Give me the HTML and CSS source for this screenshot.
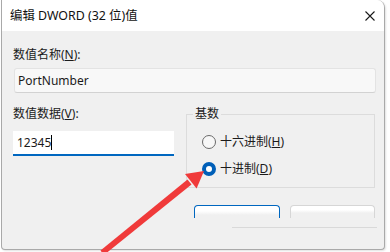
FILE: index.html
```html
<!DOCTYPE html>
<html lang="zh-CN">
<head>
<meta charset="utf-8">
<title>编辑 DWORD (32 位)值</title>
<link rel="stylesheet" href="styles.css">
</head>
<body>
<div class="window">
  <div class="titlebar">
    <span class="title">编辑 DWORD (32 位)值</span>
    <svg class="close" width="10" height="10" viewBox="0 0 10 10"><path d="M0.5 0.5 L9.5 9.5 M9.5 0.5 L0.5 9.5" stroke="#1a1a1a" stroke-width="1.1" fill="none"/></svg>
  </div>
  <div class="content">
    <div class="label">数值名称(<u>N</u>):</div>
    <div class="field readonly">PortNumber</div>
    <div class="lower">
      <div class="leftcol">
        <div class="label">数值数据(<u>V</u>):</div>
        <div class="field edit"><span>12345</span><span class="caret"></span></div>
      </div>
      <fieldset class="group">
        <legend>基数</legend>
        <div class="radio"><span class="dot"></span><span>十六进制(<u>H</u>)</span></div>
        <div class="radio"><span class="dot checked"></span><span>十进制(<u>D</u>)</span></div>
      </fieldset>
    </div>
    <div class="buttons">
      <div class="btn primary"></div>
      <div class="btn"></div>
    </div>
    <div class="sep"></div>
  </div>
</div>
<svg class="arrow" width="390" height="252" viewBox="0 0 390 252">
  <polygon points="191.5,184.5 187.5,179.5 100.5,250.5 104,255" fill="#f03a3a"/>
  <polygon points="204,171 196.6,188.5 185,174" fill="#f03a3a"/>
</svg>
</body>
</html>
```
FILE: styles.css
```css
html, body {
  margin: 0;
  padding: 0;
  background: #ffffff;
}
body {
  position: relative;
  width: 390px;
  height: 252px;
  overflow: hidden;
  font-family: "Noto Sans", "Noto Sans CJK SC", sans-serif;
  font-size: 12px;
  line-height: 16px;
  color: #1b1b1b;
}
.window {
  margin-left: 1px;
  width: 382px;
  height: 249px;
  border: 1px solid #a9a9a9;
  border-top: none;
  border-radius: 0 8px 4px 4px;
  background: #f0f0f0;
  box-shadow: 1px 1px 2px rgba(0,0,0,0.12);
  overflow: hidden;
}
.titlebar {
  height: 31px;
  background: #ffffff;
  display: flex;
  align-items: center;
  justify-content: space-between;
  padding: 0 9px 0 8px;
}
.title {
  font-size: 12.4px;
  color: #111;
}
.close {
  display: block;
}
.content {
  padding: 16px 7px 0 11px;
}
.label {
  height: 16px;
}
.field {
  box-sizing: border-box;
  height: 25px;
  display: flex;
  align-items: center;
  padding-left: 4px;
}
.readonly {
  margin: 5px 1px 0 1px;
  background: #f8f8f8;
  border: 1px solid #e3e3e3;
  border-bottom-color: #d2d2d2;
  border-radius: 3px;
  padding-left: 3px;
}
.lower {
  margin-top: 13px;
  display: grid;
  grid-template-columns: 161px 189px;
  column-gap: 12px;
  align-items: start;
}
.edit {
  margin-top: 9px;
  background: #ffffff;
  border-bottom: 2px solid #0067c0;
  padding-left: 4px;
}
.caret {
  display: inline-block;
  width: 1px;
  height: 15px;
  background: #000;
}
.group {
  margin: 0;
  padding: 12px 0 10px 15px;
  border: 1px solid #dcdcdc;
  height: 82px;
  box-sizing: border-box;
  min-width: 0;
}
.group legend {
  margin-left: -9px;
  padding: 0 2px;
  line-height: 16px;
}
.radio {
  display: flex;
  align-items: center;
  gap: 4px;
  height: 16px;
  margin-bottom: 11px;
}
.dot {
  box-sizing: border-box;
  width: 14px;
  height: 14px;
  border-radius: 50%;
  border: 1px solid #6a6a6a;
  background: #f7f7f7;
}
.dot.checked {
  border: 4px solid #005fb8;
  background: #ffffff;
}
.buttons {
  margin-top: 17px;
  display: flex;
  justify-content: flex-end;
  gap: 10px;
  padding-right: 2px;
}
.btn {
  box-sizing: border-box;
  width: 85px;
  height: 13px;
  border: 1px solid #d6d6d6;
  border-bottom: none;
  border-radius: 4px 4px 0 0;
  background: linear-gradient(#ffffff 0, #ffffff 4px, #f0f0f0 7px);
}
.btn.primary {
  width: 86px;
  border-color: #0067c0;
  background: linear-gradient(#ffffff 0, #ffffff 5px, #f0f0f0 9px);
}
.sep {
  margin: 9px 0 0 219px;
  height: 1px;
  background: #d9d9d9;
}
.arrow {
  position: absolute;
  left: 0;
  top: 0;
  pointer-events: none;
}
```
